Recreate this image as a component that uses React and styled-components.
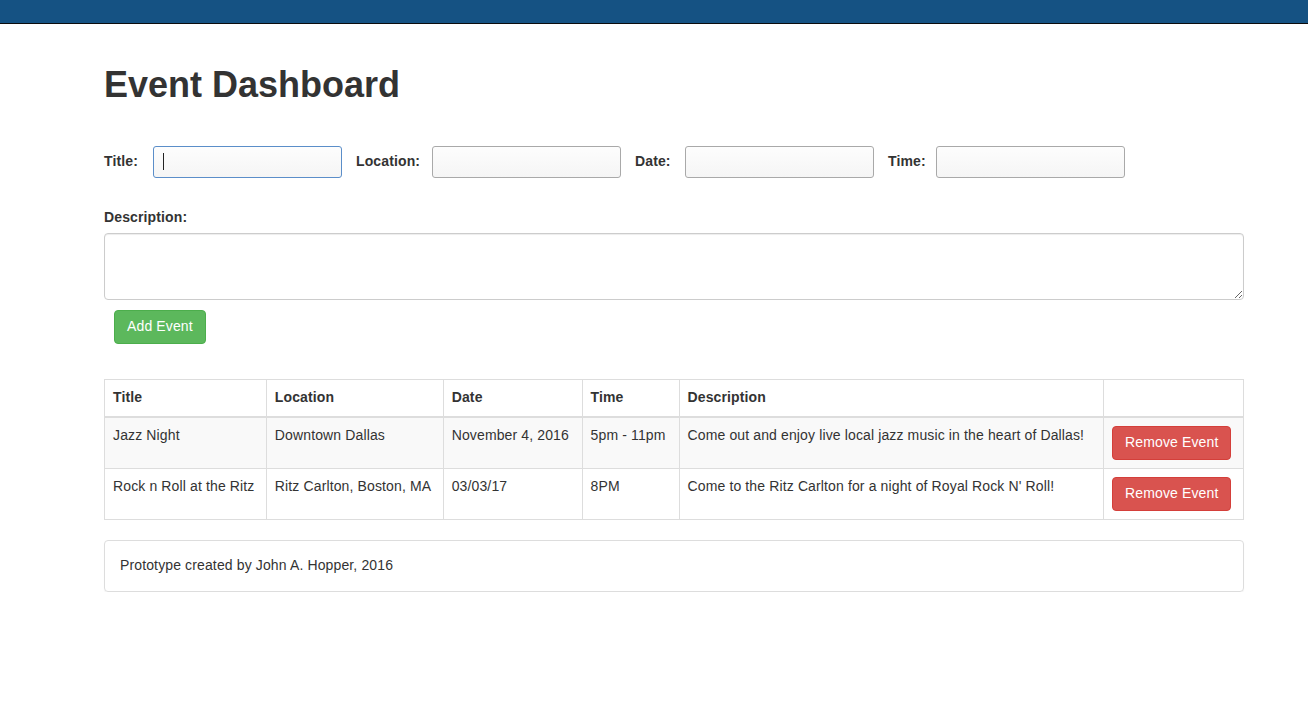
import React from 'react';
import styled, {createGlobalStyle} from 'styled-components';

const GlobalStyle = createGlobalStyle`
  html, body {
    margin: 0;
    padding: 0;
    background: #fff;
  }
  body {
    font-family: "Liberation Sans", Arial, Helvetica, sans-serif;
    font-size: 14px;
    line-height: 1.42857;
    letter-spacing: 0.13px;
    color: #333;
  }
  * {
    box-sizing: border-box;
  }
`;

const NavBar = styled.div`
  height: 24px;
  background-color: #155283;
  border-bottom: 1px solid #0c0c0c;
`;

const Container = styled.div`
  width: 1140px;
  margin-left: 104px;
`;

const Heading = styled.h1`
  margin: 41px 0 41px;
  font-size: 36px;
  font-weight: bold;
  line-height: 1.1;
  letter-spacing: 0;
  color: #333;
`;

const FieldRow = styled.div`
  display: flex;
  align-items: center;
  height: 32px;
`;

const Label = styled.label`
  flex: none;
  width: ${p => p.$width}px;
  font-weight: bold;
`;

const Input = styled.input`
  flex: none;
  width: 189px;
  height: 32px;
  margin-right: 14px;
  padding: 4px 8px;
  font-family: inherit;
  font-size: 14px;
  color: #333;
  background: linear-gradient(#fdfdfd, #f5f5f5);
  border: 1px solid #a9a9a9;
  border-radius: 3px;
  outline: none;
`;

const Caret = styled.span`
  display: inline-block;
  width: 1px;
  height: 17px;
  background: #222;
`;

const FocusedInput = styled.div`
  flex: none;
  display: flex;
  align-items: center;
  width: 189px;
  height: 32px;
  margin-right: 14px;
  padding: 0 9px;
  background: linear-gradient(#fdfdfd, #f5f5f5);
  border: 1px solid #5b8ec9;
  border-radius: 3px;
`;

const DescBlock = styled.div`
  margin-top: 30px;
`;

const DescLabel = styled.label`
  display: block;
  font-weight: bold;
  margin-bottom: 5px;
`;

const TextArea = styled.textarea`
  display: block;
  width: 1140px;
  height: 67px;
  padding: 6px 12px;
  font-family: inherit;
  font-size: 14px;
  border: 1px solid #ccc;
  border-radius: 4px;
  box-shadow: inset 0 1px 1px rgba(0, 0, 0, 0.075);
  resize: vertical;
  outline: none;
`;

const Button = styled.button`
  display: inline-block;
  padding: 6px 12px;
  font-family: inherit;
  font-size: 14px;
  line-height: 1.42857;
  letter-spacing: 0.13px;
  color: #fff;
  background-color: ${p => (p.$variant === 'danger' ? '#d9534f' : '#5cb85c')};
  border: 1px solid ${p => (p.$variant === 'danger' ? '#d43f3a' : '#4cae4c')};
  border-radius: 4px;
  cursor: pointer;
`;

const AddButton = styled(Button)`
  margin: 10px 0 0 10px;
`;

const Table = styled.table`
  width: 1140px;
  margin-top: 35px;
  border-collapse: collapse;
  border-spacing: 0;
  border: 1px solid #ddd;

  th,
  td {
    padding: 8px;
    border: 1px solid #ddd;
    text-align: left;
    vertical-align: top;
    line-height: 1.42857;
  }

  th {
    font-weight: bold;
    vertical-align: bottom;
    border-bottom-width: 2px;
    height: 38px;
  }

  tbody tr:nth-child(odd) {
    background-color: #f9f9f9;
  }
`;

const Panel = styled.div`
  margin-top: 20px;
  padding: 15px;
  border: 1px solid #ddd;
  border-radius: 4px;
  box-shadow: 0 1px 1px rgba(0, 0, 0, 0.05);
`;

const events = [
  {
    title: 'Jazz Night',
    location: 'Downtown Dallas',
    date: 'November 4, 2016',
    time: '5pm - 11pm',
    description: 'Come out and enjoy live local jazz music in the heart of Dallas!',
  },
  {
    title: 'Rock n Roll at the Ritz',
    location: 'Ritz Carlton, Boston, MA',
    date: '03/03/17',
    time: '8PM',
    description: "Come to the Ritz Carlton for a night of Royal Rock N' Roll!",
  },
];

const App = () => {
  return (
    <>
      <GlobalStyle />
      <NavBar />
      <Container>
        <Heading>Event Dashboard</Heading>
        <FieldRow>
          <Label $width={49}>Title:</Label>
          <FocusedInput>
            <Caret />
          </FocusedInput>
          <Label $width={76}>Location:</Label>
          <Input type="text" />
          <Label $width={50}>Date:</Label>
          <Input type="text" />
          <Label $width={48}>Time:</Label>
          <Input type="text" />
        </FieldRow>
        <DescBlock>
          <DescLabel>Description:</DescLabel>
          <TextArea />
        </DescBlock>
        <AddButton>Add Event</AddButton>
        <Table>
          <colgroup>
            <col style={{width: 162}} />
            <col style={{width: 177}} />
            <col style={{width: 139}} />
            <col style={{width: 97}} />
            <col style={{width: 425}} />
            <col style={{width: 140}} />
          </colgroup>
          <thead>
            <tr>
              <th>Title</th>
              <th>Location</th>
              <th>Date</th>
              <th>Time</th>
              <th>Description</th>
              <th></th>
            </tr>
          </thead>
          <tbody>
            {events.map(ev => (
              <tr key={ev.title}>
                <td>{ev.title}</td>
                <td>{ev.location}</td>
                <td>{ev.date}</td>
                <td>{ev.time}</td>
                <td>{ev.description}</td>
                <td>
                  <Button $variant="danger">Remove Event</Button>
                </td>
              </tr>
            ))}
          </tbody>
        </Table>
        <Panel>Prototype created by John A. Hopper, 2016</Panel>
      </Container>
    </>
  );
};

export default App;
